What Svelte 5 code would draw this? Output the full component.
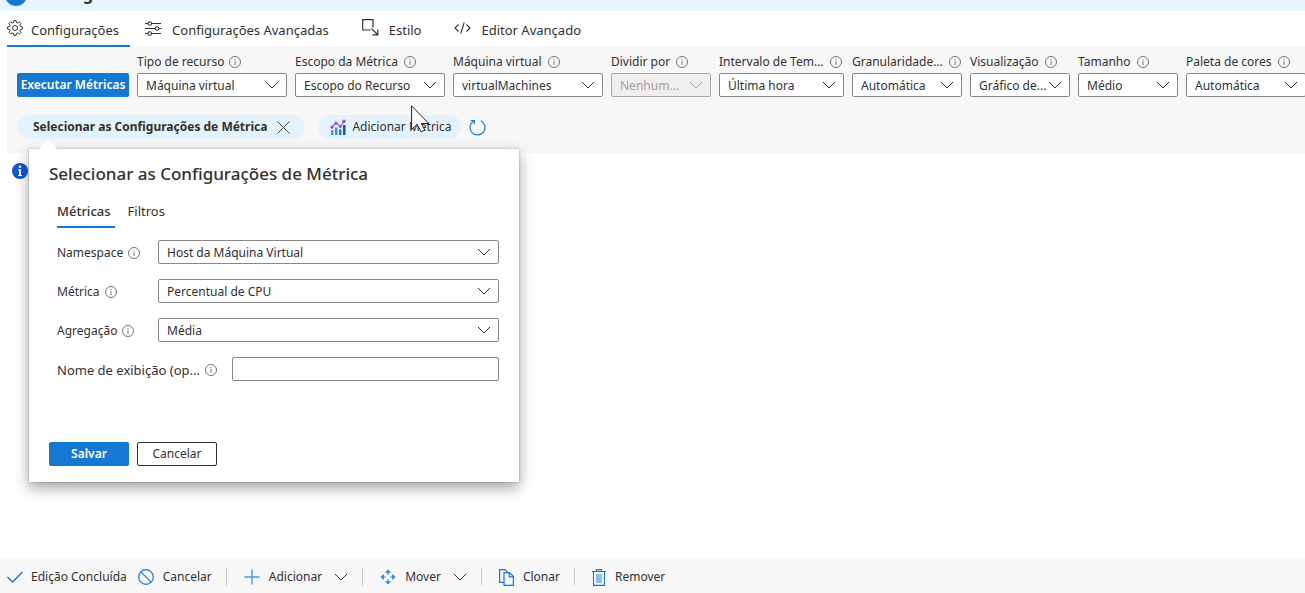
<script>
  const fields = [
    { id: 'tipo', label: 'Tipo de recurso', value: 'Máquina virtual', width: 150, tight: true },
    { id: 'escopo', label: 'Escopo da Métrica', value: 'Escopo do Recurso', width: 150 },
    { id: 'maquina', label: 'Máquina virtual', value: 'virtualMachines', width: 150 },
    { id: 'dividir', label: 'Dividir por', value: 'Nenhum...', width: 100, disabled: true },
    { id: 'intervalo', label: 'Intervalo de Tem...', value: 'Última hora', width: 125 },
    { id: 'granularidade', label: 'Granularidade...', value: 'Automática', width: 110 },
    { id: 'visualizacao', label: 'Visualização', value: 'Gráfico de...', width: 100 },
    { id: 'tamanho', label: 'Tamanho', value: 'Médio', width: 100 },
    { id: 'paleta', label: 'Paleta de cores', value: 'Automática', width: 120 }
  ];
  const rows = [
    { id: 'namespace', label: 'Namespace', value: 'Host da Máquina Virtual' },
    { id: 'metrica', label: 'Métrica', value: 'Percentual de CPU' },
    { id: 'agregacao', label: 'Agregação', value: 'Média' }
  ];
  let displayName = $state('');
</script>

{#snippet info()}
  <svg class="info" viewBox="0 0 12 12" aria-hidden="true">
    <circle cx="6" cy="6" r="5.5" fill="none" stroke="#666" stroke-width="0.9" />
    <path d="M6 5v4M6 3v1.1" stroke="#777" stroke-width="1" fill="none" />
  </svg>
{/snippet}

{#snippet chevron()}
  <svg class="chev" viewBox="0 0 14 8" aria-hidden="true">
    <path d="M1 1l6 6 6-6" fill="none" stroke="currentColor" stroke-width="1" />
  </svg>
{/snippet}

<div class="page">
  <header class="banner">
    <svg class="dot" viewBox="0 0 22 22" aria-hidden="true"><circle cx="11" cy="11" r="11" fill="#1478d4" /></svg>
    <strong>Editing</strong>
  </header>

  <nav class="tabs">
    <button class="tab active">
      <svg viewBox="0 0 16 16" width="16" height="16" fill="none" stroke="#333" stroke-width="1" stroke-linejoin="round">
        <path d="M6.9.6h2.2l.4 2 1.2.5 1.7-1.2 1.6 1.6-1.2 1.7.5 1.2 2.1.4v2.3l-2.1.4-.5 1.2 1.2 1.7-1.6 1.6-1.7-1.2-1.2.5-.4 2.1H6.9l-.4-2.1-1.200-.5L3.600 14 2 12.400l1.200-1.700-.5-1.200-2.100-.4V6.800l2.100-.4.5-1.200L2 3.500l1.600-1.600 1.700 1.200 1.200-.5z" />
        <circle cx="8" cy="8" r="2.500" />
      </svg>
      Configurações
    </button>
    <button class="tab">
      <svg viewBox="0 0 17 16" width="17" height="16" fill="none" stroke="#333" stroke-width="1.1">
        <path d="M0 3.500h3M6.500 3.500H16M0 8.500h10M14 8.500h2.500M0 13.500h3M6.500 13.500H16" />
        <circle cx="4.800" cy="3.500" r="1.800" /><circle cx="12" cy="8.500" r="1.800" /><circle cx="4.800" cy="13.500" r="1.800" />
      </svg>
      Configurações Avançadas
    </button>
    <button class="tab style">
      <svg viewBox="0 0 17 17" width="17" height="17" fill="none" stroke="#333" stroke-width="1.200">
        <path d="M11 8.500V.7H.7V11H8.500M9.500 9.500l6 6M15.800 10.500v5.300h-5.300" />
      </svg>
      Estilo
    </button>
    <button class="tab">
      <svg viewBox="0 0 17 14" width="17" height="14" fill="none" stroke="#333" stroke-width="1.100">
        <path d="M4.500 3.500L1 7l3.500 3.500M12.500 3.500L16 7l-3.500 3.500M10.200 1.500L6.800 12.500" />
      </svg>
      Editor Avançado
    </button>
  </nav>

  <section class="panel">
    <div class="fields">
      <button class="primary run">Executar Métricas</button>
      {#each fields as f}
        <div class="field" style:width="{f.width}px">
          <label for={f.id} class:tight={f.tight}>{f.label}{@render info()}</label>
          <div class="select" class:disabled={f.disabled}>
            <select id={f.id} disabled={f.disabled}><option>{f.value}</option></select>
            {@render chevron()}
          </div>
        </div>
      {/each}
    </div>

    <div class="pills">
      <div class="anchor">
        <button class="pill chosen">
          Selecionar as Configurações de Métrica
          <svg viewBox="0 0 13 13" width="13" height="13"><path d="M.5.5l12 12M12.500.5l-12 12" stroke="#444" stroke-width="1" /></svg>
        </button>

        <form class="callout" onsubmit={(e) => e.preventDefault()}>
          <h2>Selecionar as Configurações de Métrica</h2>
          <div class="subtabs">
            <button type="button" class="subtab on">Métricas</button>
            <button type="button" class="subtab">Filtros</button>
          </div>
          <div class="rows">
            {#each rows as r}
              <div class="row">
                <label for={r.id}>{r.label}{@render info()}</label>
                <div class="select">
                  <select id={r.id}><option>{r.value}</option></select>
                  {@render chevron()}
                </div>
              </div>
            {/each}
            <div class="row wide">
              <label for="nome">Nome de exibição (op...{@render info()}</label>
              <input id="nome" type="text" bind:value={displayName} />
            </div>
          </div>
          <div class="actions">
            <button class="primary">Salvar</button>
            <button type="button" class="secondary">Cancelar</button>
          </div>
        </form>
      </div>

      <button class="pill add">
        <svg viewBox="0 0 16 17" width="16" height="17">
          <path d="M1 11h2.500v5H1z" fill="#4a9be8" /><path d="M5 8.500h2.500V16H5z" fill="#3d8fe0" />
          <path d="M9 10.500h2.500V16H9z" fill="#1f6fc4" /><path d="M13 6h2.500v10H13z" fill="#1259a5" />
          <path d="M2 8l4-4 4.500 3.500L14 2.500" fill="none" stroke="#9a62e8" stroke-width="1.200" />
          <g fill="#8f55e3"><circle cx="2" cy="8.200" r="1.600" /><circle cx="6" cy="4.200" r="1.600" /><circle cx="10.300" cy="7.500" r="1.600" /><circle cx="14" cy="2.300" r="1.700" /></g>
        </svg>
        Adicionar Métrica
        <svg class="cursor" viewBox="0 0 20 28" aria-hidden="true">
          <path d="M.6.8v23.500l5.500-5 4 7.500 3.700-1.700-3.600-6.600h7.500z" fill="#fff" stroke="#222" stroke-width="1" />
        </svg>
      </button>
      <button class="refresh" aria-label="Atualizar">
        <svg viewBox="0 0 17 17" width="17" height="17" fill="none" stroke="#1478d4" stroke-width="1.200">
          <path d="M11.800 1.700a7.500 7.500 0 1 1-7.300.4M1.800 1.500h3.500v3.800" />
        </svg>
      </button>
    </div>
  </section>

  <main>
    <svg class="notice" viewBox="0 0 16 16" role="img" aria-label="Informações">
      <circle cx="8" cy="8" r="8" fill="#0f58d6" />
      <circle cx="8" cy="3.800" r="1.300" fill="#fff" /><path d="M6 6.300h3v5.700h1V13H6v-1h1V7.300H6z" fill="#fff" />
    </svg>
  </main>

  <footer>
    <button class="cmd done">
      <svg viewBox="0 0 16 12" width="16" height="12" fill="none" stroke="#1478d4" stroke-width="1.400"><path d="M.5 6l5 5L15.500 1" /></svg>
      Edição Concluída
    </button>
    <button class="cmd">
      <svg viewBox="0 0 16 16" width="16" height="16" fill="none" stroke="#1478d4" stroke-width="1.200"><circle cx="8" cy="8" r="7.300" /><path d="M2.800 2.800l10.400 10.400" /></svg>
      Cancelar
    </button>
    <span class="sep"></span>
    <button class="cmd">
      <svg viewBox="0 0 16 16" width="16" height="16" fill="none" stroke="#4a9be0" stroke-width="1.400"><path d="M8 .5v15M.5 8h15" /></svg>
      Adicionar
      {@render chevron()}
    </button>
    <span class="sep"></span>
    <button class="cmd">
      <svg viewBox="0 0 16 16" width="16" height="16" fill="#2a85d8">
        <path d="M8 .5l3 3.300H8.600v2H7.400v-2H5zM8 15.500l3-3.300H8.600v-2H7.400v2H5zM.5 8l3.300-3v2.400h2v1.200h-2V11zM15.500 8l-3.300-3v2.400h-2v1.200h2V11z" />
      </svg>
      Mover
      {@render chevron()}
    </button>
    <span class="sep"></span>
    <button class="cmd">
      <svg viewBox="0 0 15 17" width="15" height="17" fill="none" stroke="#1478d4" stroke-width="1.200">
        <path d="M5 13.400H.6V.6H6l2.500 2.500M5 3.600h5.500l3.900 3.900v8.900H5zM10.300 3.800v4h4" />
      </svg>
      Clonar
    </button>
    <span class="sep"></span>
    <button class="cmd">
      <svg viewBox="0 0 14 17" width="14" height="17" fill="none" stroke="#1478d4" stroke-width="1.100">
        <path d="M4 5h6v9H4z" fill="#8dbde9" stroke="none" /><path d="M0 2.500h14M4.500 2.500V.6h5v1.900M1.500 2.500v13.900h11V2.500" />
      </svg>
      Remover
    </button>
  </footer>
</div>

<style>
  :global(body) { margin: 0; background: #fff; }
  .page {
    display: flex; flex-direction: column; min-height: 100vh; overflow-x: clip;
    font-family: "Noto Sans", sans-serif; font-size: 12px; line-height: 16px; color: #323130;
  }
  button, select, input { font: inherit; color: inherit; }
  button { border: 0; background: none; padding: 0; white-space: nowrap; cursor: pointer; }
  svg { flex: none; display: block; }

  .banner { display: flex; align-items: flex-end; gap: 10px; height: 11px; padding-left: 5px; background: #e6f5ff; overflow: hidden; }
  .banner svg { width: 22px; height: 22px; margin-bottom: 5px; }
  .banner strong { font-size: 16px; line-height: 20px; margin-bottom: 7px; }

  .tabs { display: flex; height: 36px; gap: 15px; padding-left: 7px; font-size: 13px; }
  .tab { display: flex; align-items: center; gap: 8px; border-bottom: 2px solid transparent; padding: 4px 8px 0 0; }
  .tab + .tab { gap: 10px; padding-right: 18px; }
  .tab svg { margin-bottom: 5px; }
  .tab.active { border-color: #1478d4; padding-right: 11px; }

  .panel { margin-left: 7px; padding: 7px 0 14px 10px; background: #f7f7f7; }
  .fields { display: flex; align-items: flex-end; gap: 8px; }
  .primary { height: 24px; background: #1478d4; color: #fff; border-radius: 2px; font-weight: 600; }
  .run { width: 112px; flex: none; }
  .field { flex: none; }
  label { display: flex; align-items: center; gap: 6px; white-space: nowrap; }
  label.tight { gap: 5px; }
  .field label { height: 16px; margin-bottom: 3px; }
  .info { width: 12px; height: 12px; }
  .select { position: relative; height: 24px; }
  select, input {
    appearance: none; display: block; box-sizing: border-box; width: 100%; height: 24px; margin: 0;
    padding: 1px 8px 0; border: 1px solid #8a8886; border-radius: 2px; background: #fff; opacity: 1;
  }
  .chev { width: 14px; height: 8px; }
  .select .chev { position: absolute; right: 8px; top: 8px; pointer-events: none; }
  .disabled, .disabled select { color: #a19f9d; }
  .disabled select { background: #f0efee; border-color: #aaa; }

  .pills { display: flex; align-items: center; gap: 8px; margin-top: 18px; }
  .anchor { position: relative; margin-right: 5px; }
  .pill { position: relative; display: flex; align-items: center; height: 24px; border-radius: 12px; background: #e5f1fb; }
  .chosen { gap: 10px; padding: 0 15px 0 16px; font-weight: 700; }
  .add { gap: 6px; padding: 0 10px 0 12px; }
  .cursor { position: absolute; left: 93px; top: -10px; width: 20px; height: 28px; }

  .callout {
    position: absolute; z-index: 2; left: 12px; top: 34px; box-sizing: border-box; width: 490px;
    padding: 14px 20px 16px; background: #fff; box-shadow: 0 6px 14px rgba(0, 0, 0, .36), 0 0 2px rgba(0, 0, 0, .3);
  }
  .callout::before {
    content: ""; position: absolute; left: 9px; top: -9px; border: 10px solid transparent;
    border-top: 0; border-bottom-color: #fff;
  }
  h2 { margin: 0; font-size: 17px; line-height: 22px; font-weight: 500; }
  .subtabs { display: flex; gap: 13px; margin: 17px 0 0 8px; }
  .subtab { height: 26px; padding: 0 0 6px; border-bottom: 2px solid transparent; font-size: 13px; }
  .on { border-color: #1478d4; font-weight: 500; padding-right: 4px; }
  .rows { display: grid; gap: 15px; margin: 12px 0 0 8px; }
  .row { display: grid; grid-template-columns: 101px 1fr; align-items: center; }
  .row label { padding-top: 2px; gap: 5px; }
  .row.wide { grid-template-columns: 175px 1fr; }
  .wide label { font-size: 13px; }
  .actions { display: flex; gap: 8px; margin-top: 61px; }
  .actions button { width: 80px; height: 24px; }
  .secondary { border: 1px solid #323130; border-radius: 2px; }

  main { flex: 1; padding: 10px 12px; }
  .notice { width: 16px; height: 16px; }

  footer { display: flex; align-items: center; height: 35px; padding: 3px 7px 0; box-sizing: border-box; background: #f7f7f7; }
  .cmd { display: flex; align-items: center; gap: 9px; }
  .cmd .chev { margin-left: 3px; }
  .done { gap: 8px; margin-right: 11px; }
  .sep { width: 1px; height: 18px; margin: 0 17px 0 14px; background: #ccc; }
</style>
